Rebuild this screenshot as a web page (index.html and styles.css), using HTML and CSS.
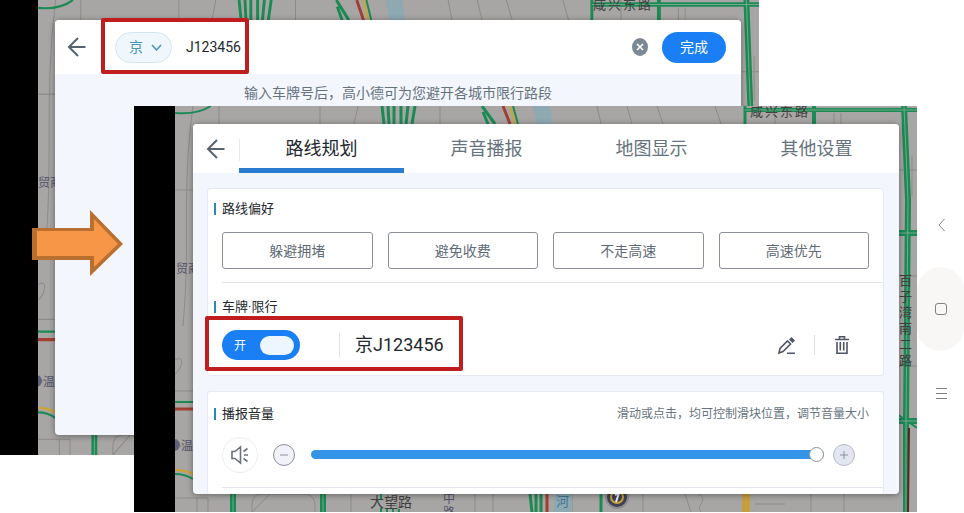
FILE: index.html
```html
<!DOCTYPE html>
<html lang="zh-CN">
<head>
    <meta charset="UTF-8">
    <meta name="viewport" content="width=device-width, initial-scale=1.0">
    <title>车牌限行设置</title>
    <link rel="stylesheet" href="styles.css">
</head>
<body>
    <!-- 两个屏幕共用的底图 -->
    <svg class="defs" width="0" height="0" aria-hidden="true">
        <symbol id="roads" viewBox="0 0 742 406" preserveAspectRatio="none">
            <g fill="none" stroke="#8c8b88" stroke-width="1">
                <path d="M44 0V18M145 0V18M183 0L179 18M265 0V18M422 0L426 18M452 0L457 18M482 0L488 18M540 0L546 18M600 0V18M659 7V18M666 7V18"/>
                <path d="M0 84H18M18 0C6 90 16 130 8 220M0 285H18M0 340H18M724 64H742M724 170H742M724 260H742M737 50V90"/>
                <path d="M0 392H33V406M22 392V406M77 406V398Q78 388 86 388H132Q140 390 140 400V406M77 406L95 388M176 388V406M222 388V406M300 388V406M318 388V406M397 388V406M468 388V406M510 388L516 406M524 388C534 394 520 400 526 406M580 398H610M636 388V406M669 388V406"/>
                <path d="M0 254C10 248 8 262 0 268"/>
            </g>
            <path d="M358 0H375L378 18H362ZM380 388H397V406H378Z" fill="#8fa9b3"/>
            <g fill="none" stroke="#1c8a55" stroke-width="3">
                <path d="M0 7Q22 9 36 0M338 0L343 18" stroke-width="2"/>
                <path d="M207 0L209 18M213 0L214 18M219 0V18M226 0V18M233 0L231 18M240 0L237 18M307 0L320 18M308 6L313 18"/>
                <path d="M0 296H18M0 368Q10 368 18 373" stroke-width="2"/>
                <path d="M58 388V406M148 388V406" stroke-width="6"/>
                <path d="M355 388L357 406M361 388V406M366 388V406M426 388V406M570 0V18"/>
                <path d="M206 402V406M212 403V406M218 402V406M224 403V406M206 388V393" stroke-width="2"/>
                <path d="M570 4H742M639 0V18" stroke-width="4"/>
                <path d="M729 0L733 94L731 315V406M724 127H742M722 315H742" stroke-width="6"/>
                <path d="M722 308L742 322" stroke-width="2"/>
            </g>
            <g fill="none" stroke="#75a88b" stroke-width="1">
                <path d="M58 388V406M148 388V406M570 4H742M729 0L733 94L731 315V406M724 127H742M722 315H742"/>
            </g>
            <path d="M328 0L335 18M372 388V406M0 303H18" fill="none" stroke="#a33e32" stroke-width="3"/>
            <path d="M734 322L733 406" fill="none" stroke="#5b2523" stroke-width="2"/>
            <path d="M0 364Q10 364 18 368M335 0L340 18" fill="none" stroke="#cda42d" stroke-width="2"/>
            <path d="M569 388V406M573 388V406" stroke="#cf9c1d" stroke-width="3"/>
        </symbol>
    </svg>

    <div class="stage">
        <!-- 输入车牌 -->
        <section class="screen screen-input">
            <div class="map">
                <svg class="map-bg" viewBox="0 0 721 455" preserveAspectRatio="xMidYMid slice" aria-hidden="true">
                    <use href="#roads" width="721" height="455"/>
                    <g class="road-name">
                        <text x="555" y="9" letter-spacing="2">咸兴东路</text>
                        <text x="0" y="187" class="place">贸商</text>
                        <circle cx="-2" cy="381" r="6" fill="#62637a"/>
                        <text x="5" y="386" class="place">温</text>
                    </g>
                </svg>
                <div class="panel">
                    <header class="input-bar">
                        <button class="back" type="button" aria-label="返回">
                            <svg width="20" height="22" viewBox="0 0 20 22"><path d="M11 2L2 11L11 20M2 11H18.500"/></svg>
                        </button>
                        <div class="plate-input marked">
                            <label class="city">
                                <select aria-label="省份简称">
                                    <option>京</option>
                                </select>
                                <svg width="11" height="7" viewBox="0 0 11 7"><path d="M1 1L5.500 6L10 1"/></svg>
                            </label>
                            <input class="number" type="text" value="J123456" aria-label="车牌号">
                        </div>
                        <button class="clear" type="button" aria-label="清空">
                            <svg width="16" height="18" viewBox="0 0 16 18"><ellipse cx="8" cy="9" rx="8" ry="9" fill="#7b8895"/><path d="M5 6L11 12M11 6L5 12" stroke="#fff" stroke-width="1.700"/></svg>
                        </button>
                        <button class="done" type="button">完成</button>
                    </header>
                    <p class="hint">输入车牌号后，高小德可为您避开各城市限行路段</p>
                </div>
            </div>
        </section>

        <!-- 导航设置 -->
        <section class="screen screen-setting">
            <div class="map">
                <svg class="map-bg" viewBox="0 0 742 406" preserveAspectRatio="xMidYMid slice" aria-hidden="true">
                    <use href="#roads" width="742" height="406"/>
                    <g class="road-name">
                        <text x="575" y="10" letter-spacing="2">咸兴东路</text>
                        <text x="1" y="167" class="place">贸商</text>
                        <circle cx="-1" cy="339" r="6" fill="#62637a"/>
                        <text x="6" y="344" class="place">温</text>
                        <text x="195" y="401" class="big">大望路</text>
                        <text x="268" y="397" class="place">中</text>
                        <text x="268" y="411" class="place">路</text>
                        <text x="381" y="400" fill="#3f7793">河</text>
                        <text x="724" y="179">百</text>
                        <text x="724" y="195">子</text>
                        <text x="724" y="211">湾</text>
                        <text x="724" y="227">南</text>
                        <text x="724" y="243">二</text>
                        <text x="724" y="259">路</text>
                    </g>
                    <circle cx="442" cy="391" r="11" fill="#3d4152" stroke="#8d8d91" stroke-width="2"/>
                    <circle cx="442" cy="391" r="6" fill="none" stroke="#c8a33c" stroke-width="2"/>
                    <path d="M440 389L444 387L441 396" fill="none" stroke="#eee" stroke-width="2"/>
                </svg>
                <div class="panel">
                    <nav class="tabs">
                        <button class="back" type="button" aria-label="返回">
                            <svg width="20" height="22" viewBox="0 0 20 22"><path d="M11 2L2 11L11 20M2 11H18.500"/></svg>
                        </button>
                        <a class="tab active" href="#route">路线规划</a>
                        <a class="tab" href="#sound">声音播报</a>
                        <a class="tab" href="#map">地图显示</a>
                        <a class="tab" href="#other">其他设置</a>
                    </nav>
                    <div class="content" id="route">
                        <div class="card">
                            <h2>路线偏好</h2>
                            <div class="prefer">
                                <button type="button">躲避拥堵</button>
                                <button type="button">避免收费</button>
                                <button type="button">不走高速</button>
                                <button type="button">高速优先</button>
                            </div>
                            <h2 class="limit">车牌·限行</h2>
                            <div class="plate">
                                <div class="plate-state marked">
                                    <label class="switch">
                                        <input type="checkbox" aria-label="车牌限行" checked>
                                        <span>开</span>
                                    </label>
                                    <span class="plate-no">京J123456</span>
                                </div>
                                <button class="tool edit" type="button" aria-label="编辑">
                                    <svg width="20" height="20" viewBox="0 0 20 20"><path d="M2 18L3 13.500L10.500 6L13.500 9L6 16.500ZM10 18.200H18" fill="none" stroke="#4f5665" stroke-width="1.600"/><path d="M12 4.500L14.500 2L18 5.500L15.500 8Z" fill="#4f5665"/></svg>
                                </button>
                                <button class="tool remove" type="button" aria-label="删除">
                                    <svg width="16" height="20" viewBox="0 0 16 20"><path d="M1 4.500H15M5.500 4V1.800H10.500V4M3 7V18.200H13V7M6.300 7V15.500M9.700 7V15.500" fill="none" stroke="#4f5665" stroke-width="1.600"/></svg>
                                </button>
                            </div>
                        </div>
                        <div class="card volume">
                            <div class="volume-title">
                                <h2>播报音量</h2>
                                <small>滑动或点击，均可控制滑块位置，调节音量大小</small>
                            </div>
                            <div class="volume-row">
                                <button class="speaker" type="button" aria-label="试听">
                                    <svg width="20" height="20" viewBox="0 0 20 20"><path d="M2 6.500H5L10.500 2V18L5 13.500H2ZM13.500 6.500L17.500 3.500M14 10H18M13.500 13.500L17.500 16.500" fill="none" stroke="#6b717a" stroke-width="1.600"/></svg>
                                </button>
                                <button class="step minus" type="button" aria-label="减小音量">
                                    <svg width="10" height="10" viewBox="0 0 10 10"><path d="M1 5H9"/></svg>
                                </button>
                                <input class="range" type="range" min="0" max="100" value="100" aria-label="播报音量">
                                <button class="step plus" type="button" aria-label="增大音量">
                                    <svg width="10" height="10" viewBox="0 0 10 10"><path d="M1 5H9M5 1V9"/></svg>
                                </button>
                            </div>
                        </div>
                    </div>
                </div>
            </div>
            <div class="keys">
                <button type="button" aria-label="返回键">
                    <svg width="14" height="14" viewBox="0 0 14 14"><path d="M10.500 1L5 7L10.500 13"/></svg>
                </button>
                <button class="home" type="button" aria-label="主页键">
                    <svg width="14" height="14" viewBox="0 0 14 14"><rect x="1.500" y="1.500" width="11" height="11" rx="2.500"/></svg>
                </button>
                <button type="button" aria-label="菜单键">
                    <svg width="14" height="14" viewBox="0 0 14 14"><path d="M2 2.500H13M2 7.500H13M2 12.500H13"/></svg>
                </button>
            </div>
        </section>

        <svg class="arrow" width="92" height="68" viewBox="0 0 92 68" aria-hidden="true">
            <path d="M0 18H58V0L91 34L58 66V50H0Z" fill="#b96f30"/>
            <path d="M5 21H62V9L86 34L62 57V46H5Z" fill="#f79646"/>
        </svg>
    </div>
</body>
</html>
```

FILE: styles.css
```css
* {
    box-sizing: border-box;
}
body,
h2,
p {
    margin: 0;
    padding: 0;
}
body {
    background-color: #fff;
    color: #23272e;
    font-family: Roboto, "Noto Sans CJK SC", sans-serif;
    font-size: 14px;
}
button,
input,
select {
    margin: 0;
    padding: 0;
    border: none;
    background: none;
    color: inherit;
    font: inherit;
    cursor: pointer;
}
button {
    display: flex;
    align-items: center;
    justify-content: center;
}
svg {
    display: block;
    flex: none;
}
.defs {
    position: absolute;
}

/* 两个屏幕叠放 */
.stage {
    position: relative;
    display: grid;
}
.screen {
    grid-area: 1 / 1;
    display: flex;
    background-color: #000;
}
.screen-input {
    align-self: start;
    margin-right: 205px;
    padding-left: 38px;
}
.screen-setting {
    position: relative;
    align-self: start;
    margin: 106px 0 0 134px;
    padding-left: 41px;
}
.map {
    position: relative;
    flex: 1;
    min-width: 0;
    overflow: hidden;
    padding: 18px;
    background-color: #a8a6a4;
}
.screen-input .map {
    padding: 20px 18px 20px 17px;
}
.map-bg {
    position: absolute;
    top: 0;
    left: 0;
    width: 100%;
    height: 100%;
}
.road-name {
    font-size: 13px;
    fill: #3f4040;
}
.road-name .place {
    font-size: 12px;
    fill: #53546b;
}
.road-name .big {
    font-size: 14px;
}
.panel {
    position: relative;
    border-radius: 4px;
    background-color: #f3f6fd;
    box-shadow: 0 1px 6px rgba(0, 0, 0, 0.4);
}
.back path {
    fill: none;
    stroke: #56636f;
    stroke-width: 2;
}

/* 红色标注框 */
.marked {
    position: relative;
}
.marked::after {
    content: "";
    position: absolute;
    inset: -14px -4px -11px -14px;
    border: 4px solid #c01d1f;
    border-radius: 2px;
    pointer-events: none;
}

.screen-input .panel {
    min-height: 415px;
}
.input-bar {
    display: flex;
    align-items: center;
    height: 54px;
    padding: 0 15px 0 12px;
    border-radius: 4px 4px 0 0;
    background-color: #fff;
}
.plate-input {
    display: flex;
    align-items: center;
    margin-left: 28px;
    margin-right: auto;
    height: 31px;
}
.city {
    position: relative;
    display: flex;
    align-items: center;
}
.city select {
    width: 57px;
    height: 31px;
    padding-left: 13px;
    border: 1px solid #d5e5f0;
    border-radius: 16px;
    background-color: #eff7fd;
    color: #4594b8;
    appearance: none;
}
.city svg {
    position: absolute;
    right: 10px;
    pointer-events: none;
}
.city path {
    fill: none;
    stroke: #4594b8;
    stroke-width: 1.5;
}
.number {
    width: 59px;
    margin-left: 14px;
    outline: none;
}
.done {
    width: 64px;
    height: 31px;
    margin-left: 14px;
    padding-bottom: 2px;
    border-radius: 16px;
    background-color: #1a7ff4;
    color: #fff;
}
.hint {
    padding-top: 9px;
    color: #66737e;
    line-height: 20px;
    text-align: center;
}

.tabs {
    display: flex;
    height: 49px;
    border-radius: 4px 4px 0 0;
    background-color: #fff;
}
.tabs .back {
    width: 46px;
}
.tab {
    flex: 1;
    border-bottom: 5px solid transparent;
    color: #66737e;
    font-size: 18px;
    line-height: 49px;
    text-align: center;
    text-decoration: none;
}
.active {
    border-bottom-color: #2a7bd2;
    color: #23272e;
    background: linear-gradient(#e8eaf0, #e8eaf0) 0 15px / 1px 22px no-repeat;
}
.content {
    display: grid;
    gap: 15px;
    padding: 15px 15px 0 14px;
}
.card {
    padding: 10px 14px 15px;
    border: 1px solid #e6eaf2;
    border-radius: 3px;
    background-color: #fff;
}
h2 {
    position: relative;
    font-size: 13px;
    font-weight: 400;
    line-height: 20px;
}
h2::before {
    content: "";
    position: absolute;
    top: 4px;
    left: -8px;
    width: 2px;
    height: 12px;
    background-color: #2c86b8;
}
.prefer {
    display: grid;
    grid-template-columns: repeat(4, 1fr);
    gap: 15px;
    margin-top: 13px;
}
.prefer button {
    height: 37px;
    padding-bottom: 2px;
    border: 1px solid #8b9098;
    border-radius: 3px;
    color: #5f6b76;
}
.limit {
    margin: 13px -14px 0 0;
    padding-top: 14px;
    border-top: 1px solid #e2e6ec;
}
.limit::before {
    top: 18px;
}
.plate {
    display: flex;
    align-items: center;
    height: 30px;
    margin-top: 13px;
}
.plate-state {
    display: flex;
    align-items: center;
    margin-right: auto;
}
.plate-state::after {
    inset: -14px -19px -11px -17px;
}
.switch {
    position: relative;
    display: flex;
    align-items: center;
    color: #fff;
    font-size: 12px;
}
.switch input {
    width: 78px;
    height: 30px;
    border-radius: 15px;
    background-color: #1a7ff4;
    appearance: none;
}
.switch input::before {
    content: "";
    display: block;
    width: 34px;
    height: 19px;
    margin: 6px 0 0 38px;
    border-radius: 10px;
    background-color: #edf6fe;
}
.switch span {
    position: absolute;
    left: 12px;
    padding-bottom: 2px;
    pointer-events: none;
}
.plate-no {
    margin-left: 39px;
    padding-left: 15px;
    border-left: 1px solid #e2e4e9;
    font-size: 18px;
    line-height: 24px;
}
.tool {
    height: 20px;
}
.edit {
    padding-right: 17px;
    border-right: 1px solid #dddfe6;
}
.remove {
    padding: 0 19px;
}
.volume {
    padding-top: 12px;
    padding-bottom: 6px;
    border-bottom: none;
}
.volume-title {
    display: flex;
    justify-content: space-between;
    line-height: 20px;
}
.volume-title small {
    color: #66737e;
    font-size: 12px;
}
.volume-row {
    display: flex;
    align-items: center;
    height: 64px;
    margin-right: -14px;
    padding-right: 28px;
    padding-bottom: 2px;
    border-bottom: 1px solid #e2e6ec;
}
.speaker {
    width: 36px;
    height: 36px;
    border: 1px solid #eceef2;
    border-radius: 50%;
}
.step {
    width: 22px;
    height: 22px;
    border: 1px solid #8c909b;
    border-radius: 50%;
    background-color: #f1f1f9;
}
.step path {
    fill: none;
    stroke: #8c909b;
    stroke-width: 1;
}
.minus {
    margin-left: 15px;
}
.plus {
    border-color: #b5bac6;
    background-color: #e2e6f0;
}
.range {
    flex: 1;
    min-width: 0;
    height: 14px;
    margin: 0 9px 0 16px;
    appearance: none;
}
.range::-webkit-slider-runnable-track {
    height: 9px;
    border-radius: 5px;
    background-color: #3394e8;
}
.range::-webkit-slider-thumb {
    width: 15px;
    height: 15px;
    margin-top: -3px;
    border: 1px solid #8e949c;
    border-radius: 50%;
    background-color: #fff;
    appearance: none;
}

.keys {
    display: flex;
    flex-direction: column;
    justify-content: center;
    width: 47px;
    overflow: hidden;
    background-color: #fff;
}
.keys button {
    height: 84px;
}
.keys .home {
    border-radius: 24px;
    background-color: #f9f6f6;
}
.keys path,
.keys rect {
    fill: none;
    stroke: #85817f;
    stroke-width: 1;
}

.arrow {
    position: absolute;
    top: 210px;
    left: 32px;
}
```
